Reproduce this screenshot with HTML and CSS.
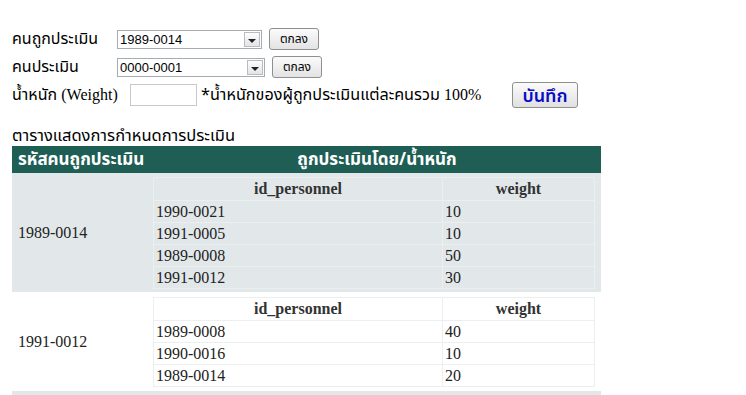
FILE: index.html
```html
<!DOCTYPE html>
<html lang="th">
<head>
  <meta charset="UTF-8">
  <meta name="viewport" content="width=device-width, initial-scale=1.0">
  <title>กำหนดการประเมิน</title>
  <link rel="stylesheet" href="styles.css">
</head>
<body>
  <form class="weight-form">
    <div class="form-row">
      <label class="lbl" for="target">คนถูกประเมิน</label>
      <div class="combo">
        <select id="target"><option>1989-0014</option></select>
        <span class="combo-arrow"></span>
      </div>
      <button type="button" class="btn-ok">ตกลง</button>
    </div>
    <div class="form-row">
      <label class="lbl" for="rater">คนประเมิน</label>
      <div class="combo combo-wide">
        <select id="rater"><option>0000-0001</option></select>
        <span class="combo-arrow"></span>
      </div>
      <button type="button" class="btn-ok">ตกลง</button>
    </div>
    <div class="form-row">
      <label class="lbl-weight" for="weight">น้ำหนัก <span class="en">(Weight)</span></label>
      <input type="text" id="weight" class="weight-input">
      <span class="note">*น้ำหนักของผู้ถูกประเมินแต่ละคนรวม <span class="en">100%</span></span>
      <button type="button" class="btn-save">บันทึก</button>
    </div>
  </form>

  <div class="caption">ตารางแสดงการกำหนดการประเมิน</div>
  <table class="plan">
    <tr class="head">
      <th class="col-id">รหัสคนถูกประเมิน</th>
      <th>ถูกประเมินโดย/น้ำหนัก</th>
    </tr>
    <tr class="alt">
      <td class="col-id">1989-0014</td>
      <td class="nest">
        <table class="sub">
          <tr><th>id_personnel</th><th class="w">weight</th></tr>
          <tr><td>1990-0021</td><td>10</td></tr>
          <tr><td>1991-0005</td><td>10</td></tr>
          <tr><td>1989-0008</td><td>50</td></tr>
          <tr><td>1991-0012</td><td>30</td></tr>
        </table>
      </td>
    </tr>
    <tr>
      <td class="col-id">1991-0012</td>
      <td class="nest nest-b">
        <table class="sub">
          <tr><th>id_personnel</th><th class="w">weight</th></tr>
          <tr><td>1989-0008</td><td>40</td></tr>
          <tr><td>1990-0016</td><td>10</td></tr>
          <tr><td>1989-0014</td><td>20</td></tr>
        </table>
      </td>
    </tr>
    <tr class="alt">
      <td class="col-id">&nbsp;</td>
      <td class="nest">&nbsp;</td>
    </tr>
  </table>
</body>
</html>
```

FILE: styles.css
```css
* {
  box-sizing: border-box;
}
body {
  margin: 0;
  padding: 25px 0 0 12px;
  font-family: "Liberation Serif", "Noto Sans Thai", "Noto Serif Thai", Tahoma, serif;
  font-size: 16px;
  color: #000;
  background: #fff;
}
.form-row {
  display: flex;
  align-items: center;
  height: 28px;
}
.lbl {
  width: 105px;
  font-family: Tahoma, "Noto Sans Thai", "DejaVu Sans", sans-serif;
  font-size: 16px;
}
.lbl-weight {
  width: 118px;
  white-space: nowrap;
  font-family: Tahoma, "Noto Sans Thai", "DejaVu Sans", sans-serif;
  font-size: 16px;
}
.en {
  font-family: "Liberation Serif", serif;
  font-size: 16px;
}
.combo {
  display: flex;
  width: 145px;
  height: 19px;
  border: 1px solid #a5acb2;
  background: #fff;
}
.combo-wide {
  width: 148px;
}
.combo select {
  appearance: none;
  -webkit-appearance: none;
  flex: 1;
  min-width: 0;
  border: none;
  background: transparent;
  padding: 0 2px;
  font-family: "Liberation Sans", Arial, sans-serif;
  font-size: 13px;
  color: #000;
  outline: none;
}
.combo-arrow {
  width: 16px;
  margin: 1px;
  border: 1px solid #b8bcc2;
  background: linear-gradient(#fdfdfd, #e4e4e4);
  position: relative;
}
.combo-arrow::after {
  content: "";
  position: absolute;
  left: 3px;
  top: 6px;
  border-left: 4px solid transparent;
  border-right: 4px solid transparent;
  border-top: 4px solid #222;
}
.btn-ok {
  margin-left: 7px;
  width: 50px;
  height: 22px;
  padding: 0;
  border: 1px solid #8e8f8f;
  border-radius: 3px;
  background: linear-gradient(#fbfbfb, #e3e3e3);
  font-family: Tahoma, "Noto Sans Thai", "DejaVu Sans", sans-serif;
  font-size: 12px;
  color: #000;
}
.weight-input {
  width: 67px;
  height: 22px;
  border: 1px solid #c9c9c9;
  margin: 0 4px 0 0;
}
.note {
  font-family: Tahoma, "Noto Sans Thai", "DejaVu Sans", sans-serif;
  font-size: 16.2px;
  width: 311px;
  white-space: nowrap;
}
.btn-save {
  width: 66px;
  height: 26px;
  padding: 0;
  border: 1px solid #8e8f8f;
  border-radius: 3px;
  background: linear-gradient(#fbfbfb, #e0e0e0);
  font-family: Tahoma, "Noto Sans Thai", "DejaVu Sans", sans-serif;
  font-size: 18px;
  font-weight: 600;
  color: #0a0ac8;
}
.caption {
  margin-top: 17px;
  height: 20px;
  line-height: 20px;
  font-family: Tahoma, "Noto Sans Thai", "DejaVu Sans", sans-serif;
  font-size: 16.5px;
}
.plan {
  width: 589px;
  border-collapse: collapse;
  color: #222;
}
.plan .head th {
  height: 27px;
  padding: 0;
  background: #1e5e54;
  color: #fff;
  font-family: Tahoma, "Noto Sans Thai", "DejaVu Sans", sans-serif;
  font-size: 17px;
  font-weight: bold;
}
.plan .head th.col-id {
  text-align: left;
  padding-left: 6px;
}
.plan td.col-id {
  width: 141px;
  padding-left: 6px;
  vertical-align: middle;
}
.plan tr.alt {
  background: #e2e8ea;
}
.nest {
  padding: 4px 6px 3px 0;
}
.nest-b {
  padding: 5px 6px 4px 0;
}
.sub {
  width: 442px;
  border-collapse: collapse;
  border-style: solid;
  border-width: 1px;
  border-color: #f2f4f4 #9a9a9a #9a9a9a #f2f4f4;
}
.sub th,
.sub td {
  height: 22px;
  padding: 0 2px;
  border: 1px solid #eceff0;
  line-height: 20px;
}
.sub th {
  height: 23px;
  font-weight: bold;
  color: #333;
}
.sub th.w {
  width: 152px;
}
```
